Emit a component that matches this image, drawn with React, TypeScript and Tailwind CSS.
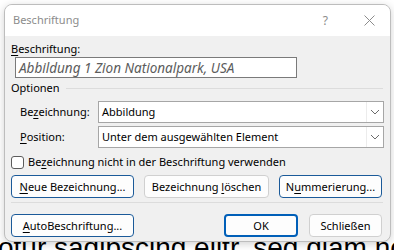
import React from "react";

const F = { fontFamily: '"Noto Sans", sans-serif' };

function U({ children }: { children: React.ReactNode }) {
  return <span className="underline underline-offset-2 decoration-1">{children}</span>;
}

function Chevron() {
  return (
    <svg width="10" height="6" viewBox="0 0 10 6" fill="none">
      <path d="M1 1 L5 5 L9 1" stroke="#6b6b6b" strokeWidth="1" />
    </svg>
  );
}

function Select({ value }: { value: string }) {
  return (
    <div className="flex-1 h-[22px] flex items-stretch bg-white border border-[#a6a6a6]">
      <div className="flex-1 flex items-center pl-[3px] text-[11px] text-black">{value}</div>
      <div className="w-[17px] flex items-center justify-center border-l border-[#ececec]">
        <Chevron />
      </div>
    </div>
  );
}

function Btn({
  children,
  w,
  accent,
  strong,
}: {
  children: React.ReactNode;
  w: string;
  accent?: boolean;
  strong?: boolean;
}) {
  const border = strong
    ? "border-2 border-[#005fb8]"
    : accent
    ? "border border-[#1b5a99]"
    : "border border-[#d0d0d0]";
  return (
    <div
      className={`${w} shrink-0 h-[23px] rounded-[4px] bg-[#fdfdfd] ${border} flex items-center justify-center text-[11px] leading-[14px] text-black`}
    >
      {children}
    </div>
  );
}

export default function App() {
  return (
    <div className="relative w-[394px] h-[250px] overflow-hidden bg-white" style={F}>
      <div
        className="pt-[234px] text-[28px] leading-[28px] text-black whitespace-nowrap -ml-[2px]"
        style={{ fontFamily: '"Liberation Sans", sans-serif' }}
      >
        otur sadipscing elitr, sed diam nonumy
      </div>

      <div className="absolute left-[4px] top-[4px] w-[387px] h-[238px] rounded-[8px] border border-[#bdbdbd] bg-[#f0f0f0] overflow-hidden shadow-[0_2px_8px_rgba(0,0,0,0.18)] flex flex-col">
        <div className="h-[31px] shrink-0 bg-white flex items-center pl-[8px] pr-[15px]">
          <span className="text-[11px] text-[#8c8c8c] flex-1">Beschriftung</span>
          <span className="text-[12px] text-[#8c8c8c] mr-[36px]">?</span>
          <svg width="11" height="11" viewBox="0 0 11 11">
            <path d="M0.5 0.5 L10.5 10.5 M10.5 0.5 L0.5 10.5" stroke="#8c8c8c" strokeWidth="1" />
          </svg>
        </div>

        <div className="flex flex-col px-[6px] pt-[5px] text-[11px] leading-[16px] text-black">
          <div className="h-[16px]">
            <U>B</U>eschriftung:
          </div>
          <div className="mt-[0px] ml-[4px] w-[282px] h-[21px] border border-[#7a7a7a] bg-white flex items-center pl-[3px] italic text-[13.5px] text-[#5c5c5c]">
            Abbildung 1 Zion Nationalpark, USA
          </div>

          <div className="mt-[2px] flex items-center h-[16px]">
            <span>Optionen</span>
            <div className="flex-1 h-px bg-[#dcdcdc] ml-[6px] mr-[1px]" />
          </div>

          <div className="mt-[5px] ml-[9px] flex items-center">
            <div className="w-[78px]">
              Be<U>z</U>eichnung:
            </div>
            <Select value="Abbildung" />
          </div>
          <div className="mt-[3px] ml-[9px] flex items-center">
            <div className="w-[78px]">
              <U>P</U>osition:
            </div>
            <Select value="Unter dem ausgewählten Element" />
          </div>

          <div className="mt-[7px] flex items-center h-[14px]">
            <div className="w-[13px] h-[13px] rounded-[3px] border border-[#5c5c5c] bg-white" />
            <span className="ml-[4px]">
              Be<U>z</U>eichnung nicht in der Beschriftung verwenden
            </span>
          </div>

          <div className="mt-[6px] flex items-center">
            <Btn w="w-[123px]" accent>
              <span>
                <U>N</U>eue Bezeichnung...
              </span>
            </Btn>
            <div className="ml-[10px]">
              <Btn w="w-[125px]">
                <span>
                  Bezeichnung <U>l</U>öschen
                </span>
              </Btn>
            </div>
            <div className="ml-[10px]">
              <Btn w="w-[103px]" accent>
                <span>
                  N<U>u</U>mmerierung...
                </span>
              </Btn>
            </div>
          </div>

          <div className="mt-[4px] h-px bg-[#dcdcdc] mr-[1px]" />

          <div className="mt-[11px] flex items-center">
            <Btn w="w-[123px]" accent>
              <span>
                <U>A</U>utoBeschriftung...
              </span>
            </Btn>
            <div className="ml-[90px]">
              <Btn w="w-[74px]" strong>
                <span>OK</span>
              </Btn>
            </div>
            <div className="ml-[11px]">
              <Btn w="w-[73px]">
                <span>Schließen</span>
              </Btn>
            </div>
          </div>
        </div>
      </div>
    </div>
  );
}
